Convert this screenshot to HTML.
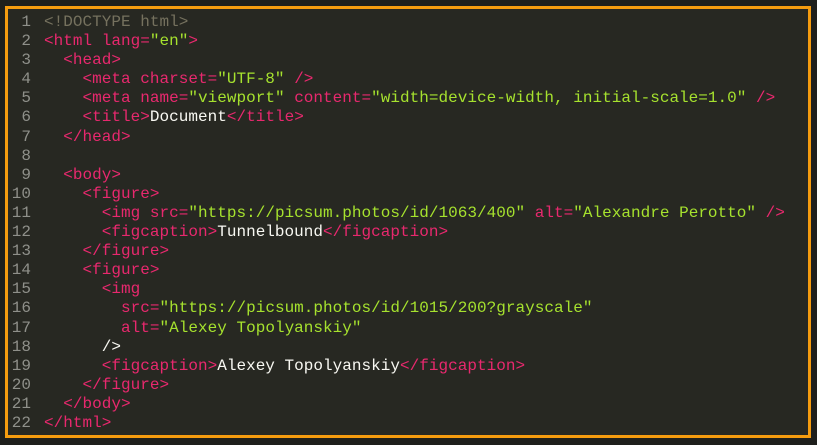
<!DOCTYPE html>
<html><head><style>
body{margin:0;width:817px;height:445px;background:#1e1f1c;overflow:hidden;position:relative}
.f{position:absolute;left:5px;top:6px;width:800px;height:426px;border:3px solid #f59c0f;background:#272822}
pre{margin:0;position:absolute;left:0;top:4px;font-family:"Liberation Mono",monospace;font-size:16px;line-height:19.1px;color:#f8f8f2;letter-spacing:0.02px}
.n{display:inline-block;width:23px;text-align:right;color:#8f908a;margin-right:13px}
.t{color:#e8286e}.s{color:#a6e22e}.c{color:#75715e}
</style></head><body><div class="f"><pre><span class="n">1</span><span class="c">&lt;!DOCTYPE html&gt;</span>
<span class="n">2</span><span class="t">&lt;html lang=</span><span class="s">"en"</span><span class="t">&gt;</span>
<span class="n">3</span>  <span class="t">&lt;head&gt;</span>
<span class="n">4</span>    <span class="t">&lt;meta charset=</span><span class="s">"UTF-8"</span> <span class="t">/&gt;</span>
<span class="n">5</span>    <span class="t">&lt;meta name=</span><span class="s">"viewport"</span> <span class="t">content=</span><span class="s">"width=device-width, initial-scale=1.0"</span> <span class="t">/&gt;</span>
<span class="n">6</span>    <span class="t">&lt;title&gt;</span>Document<span class="t">&lt;/title&gt;</span>
<span class="n">7</span>  <span class="t">&lt;/head&gt;</span>
<span class="n">8</span>
<span class="n">9</span>  <span class="t">&lt;body&gt;</span>
<span class="n">10</span>    <span class="t">&lt;figure&gt;</span>
<span class="n">11</span>      <span class="t">&lt;img src=</span><span class="s">"https://picsum.photos/id/1063/400"</span> <span class="t">alt=</span><span class="s">"Alexandre Perotto"</span> <span class="t">/&gt;</span>
<span class="n">12</span>      <span class="t">&lt;figcaption&gt;</span>Tunnelbound<span class="t">&lt;/figcaption&gt;</span>
<span class="n">13</span>    <span class="t">&lt;/figure&gt;</span>
<span class="n">14</span>    <span class="t">&lt;figure&gt;</span>
<span class="n">15</span>      <span class="t">&lt;img</span>
<span class="n">16</span>        <span class="t">src=</span><span class="s">"https://picsum.photos/id/1015/200?grayscale"</span>
<span class="n">17</span>        <span class="t">alt=</span><span class="s">"Alexey Topolyanskiy"</span>
<span class="n">18</span>      /&gt;
<span class="n">19</span>      <span class="t">&lt;figcaption&gt;</span>Alexey Topolyanskiy<span class="t">&lt;/figcaption&gt;</span>
<span class="n">20</span>    <span class="t">&lt;/figure&gt;</span>
<span class="n">21</span>  <span class="t">&lt;/body&gt;</span>
<span class="n">22</span><span class="t">&lt;/html&gt;</span></pre></div></body></html>
